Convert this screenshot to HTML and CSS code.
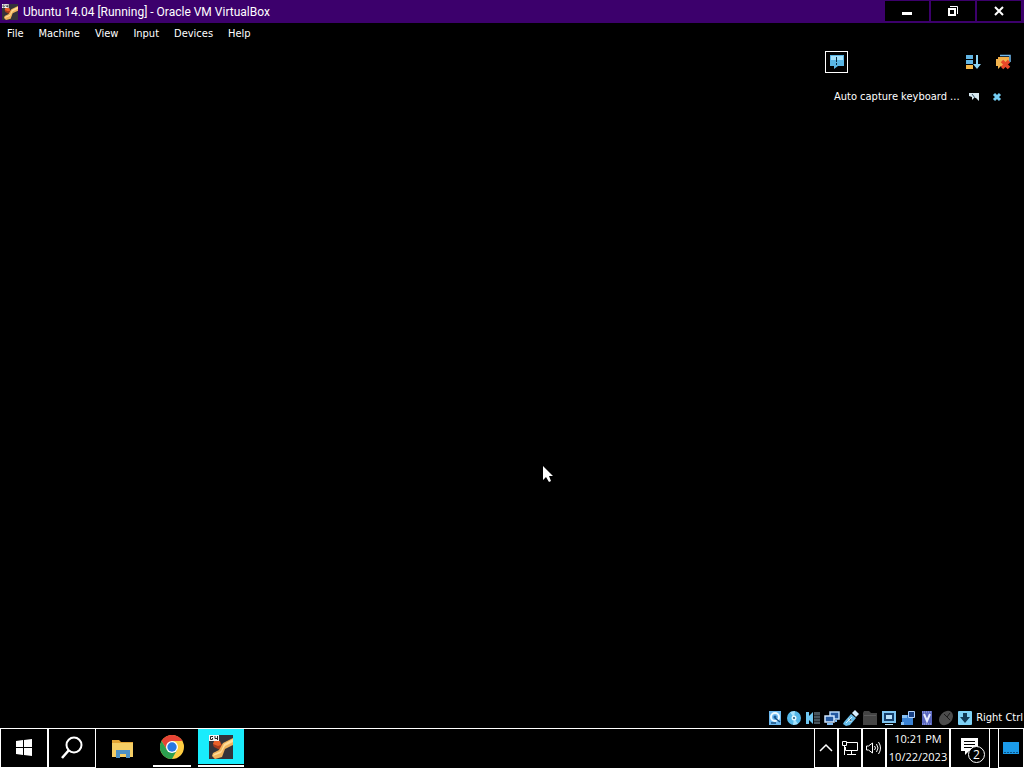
FILE: index.html
```html
<!DOCTYPE html>
<html lang="en">
<head>
<meta charset="utf-8">
<title>Ubuntu 14.04 [Running] - Oracle VM VirtualBox</title>
<link rel="stylesheet" href="styles.css">
</head>
<body>
<svg class="defs" aria-hidden="true">
  <symbol id="vbox" viewBox="0 0 24 24">
    <path fill="#34333a" d="M0 0h24v24H0z"/>
    <path fill="#a63a1b" d="M5 7h6l3 4-3 4-6-3-1-2z"/>
    <path fill="#e8602a" d="M5 6h6l1 4-3 1-5-2z"/>
    <path fill="#f0b45c" d="M24 3v7l-8 4-3 8-7 2-3-3 1-3 6-3 4-7z"/>
    <path fill="#ffdc98" d="M24 4l-9 5-3 7-7 3-1 2 8-3 4-7 8-4z"/>
    <path fill="#f4f4f4" d="M0 0h10v6H0z"/>
    <path fill="none" stroke="#222" d="M4 1.500H1.500v3h2V3M6 1v2.500h3M8.500 1v4"/>
  </symbol>
</svg>
<div class="desktop">
  <header class="titlebar">
    <svg class="app-icon"><use href="#vbox"/></svg>
    <h1 class="title">Ubuntu 14.04 [Running] - Oracle VM VirtualBox</h1>
    <div class="window-controls">
      <button class="window-button" aria-label="Minimize"><svg viewBox="0 0 12 12"><path fill="#fff" d="M1 7h10v3H1z"/></svg></button>
      <button class="window-button" aria-label="Restore"><svg viewBox="0 0 12 12"><path fill="none" stroke="#fff" d="M3 1.500h7.500V9"/><path fill="none" stroke="#fff" stroke-width="2" d="M2 4h6v6H2z"/></svg></button>
      <button class="window-button" aria-label="Close"><svg viewBox="0 0 12 12"><path fill="none" stroke="#fff" stroke-width="2" d="M2 2l8 8M10 2l-8 8"/></svg></button>
    </div>
  </header>
  <nav class="menubar">
    <button class="menu">File</button>
    <button class="menu">Machine</button>
    <button class="menu">View</button>
    <button class="menu">Input</button>
    <button class="menu">Devices</button>
    <button class="menu">Help</button>
  </nav>
  <main class="screen">
    <section class="notifications" aria-label="Notifications">
      <div class="note-tools">
        <button class="note-toggle" aria-label="Toggle notifications"><svg viewBox="0 0 16 16"><path fill="#59b5e4" d="M1 1h14v11H9l-4 3v-3H1z"/><path fill="#a5e1fa" d="M2 2h12v4H2z"/><path fill="#082b42" d="M7 3h1v5H7zM7 9h1v2H7z"/></svg></button>
        <button class="note-button" aria-label="Sort notifications"><svg viewBox="0 0 16 16"><path fill="#62b6e4" d="M1 1h7v4H1zM1 6h7v4H1z"/><path fill="#f4b84a" d="M1 11h7v4H1z"/><path fill="#8dd5f5" d="M11 1h2v9h3l-4 5-4-5h3z"/></svg></button>
        <button class="note-button" aria-label="Remove notifications"><svg viewBox="0 0 16 16"><path fill="none" stroke="#71baf0" stroke-width="1.500" d="M5 1.500h10V8"/><path fill="none" stroke="#f4ad43" stroke-width="2" d="M3 4h10v4"/><path fill="#f2b34e" d="M1 5h11v7H6l-3 3v-3H1z"/><path fill="none" stroke="#e94829" stroke-width="3.500" d="M7 7l7 7M14 7l-7 7"/></svg></button>
      </div>
      <div class="note">
        <span class="note-text">Auto capture keyboard ...</span>
        <button class="note-small" aria-label="Help"><svg viewBox="0 0 12 12"><path fill="#d7e8ef" d="M1 2h10v8L8 7H6L4 9V6L1 5z"/><path stroke="#345265" d="M4 3l3 4"/></svg></button>
        <button class="note-small" aria-label="Dismiss"><svg viewBox="0 0 12 12"><path stroke="#75cef3" stroke-width="3" d="M3 3l6 6M9 3l-6 6"/></svg></button>
      </div>
    </section>
    <svg class="pointer" viewBox="0 0 12 18" aria-hidden="true"><path fill="#fff" d="M1 1v14l3-3 3 5 2-1-2-5h4z"/></svg>
  </main>
  <footer class="statusbar">
    <svg class="status-icon" viewBox="0 0 16 16"><path fill="#6db8ee" d="M2 1h12v14H2z"/><circle cx="8" cy="7" r="4" fill="none" stroke="#eefaff" stroke-width="2"/><circle cx="8" cy="7" r="1.500" fill="#175b9a"/><path stroke="#164e80" stroke-width="1.500" d="M8 8l5 4M4 13h5"/></svg>
    <svg class="status-icon" viewBox="0 0 16 16"><circle cx="8" cy="8" r="7" fill="#55b8e9"/><path fill="#a5e2fc" d="M8 8L4 2l5-1zM8 8l4 6-5 1z"/><circle cx="8" cy="8" r="2.500" fill="#e3f8ff"/><circle cx="8" cy="8" r="1" fill="#17567b"/></svg>
    <svg class="status-icon" viewBox="0 0 16 16"><path fill="#70c8f2" d="M1 2h3v12H1zM4 6l4-4v12l-4-4z"/><path fill="#47545d" d="M9 2h6v12H9z"/><path stroke="#252d32" d="M9 5.500h6M9 8.500h6M9 11.500h6"/></svg>
    <svg class="status-icon" viewBox="0 0 16 16"><path fill="#2358a1" stroke="#b7d9fb" stroke-width="1.500" d="M6 2h9v7H6z"/><path fill="#2358a1" stroke="#d1e8ff" stroke-width="1.500" d="M1 6h9v6H1z"/><path stroke="#80bcf4" stroke-width="2" d="M3 14h6M12 10v2"/></svg>
    <svg class="status-icon" viewBox="0 0 16 16"><path fill="#66bce9" d="M1 12L8 4l5 4-6 7-4 1-3-2z"/><path fill="#d6efff" d="M9 3l3-3 4 4-3 3z"/><path stroke="#d8f5ff" d="M3 13l6-6M6 8v3h3"/></svg>
    <svg class="status-icon" viewBox="0 0 16 16"><path fill="#444" d="M1 3l1-2h5l2 2h6v12H1z"/><path stroke="#5c5c5c" d="M2 5.500h12"/></svg>
    <svg class="status-icon" viewBox="0 0 16 16"><path fill="#7fc5f1" d="M1 1h14v12H1z"/><path fill="#153e6b" d="M3 3h10v8H3z"/><path fill="#b9e1f9" d="M5 5h6v4H5zM4 14h8v1H4z"/></svg>
    <svg class="status-icon" viewBox="0 0 16 16"><path fill="#3a82d4" d="M2 5h11v10H2z"/><path fill="#86bff2" d="M2 5h5v3H2zM1 12h3v3H1z"/><path fill="#173f83" stroke="#b1d4ff" d="M8.500 1.500h6v6h-6z"/></svg>
    <svg class="status-icon" viewBox="0 0 16 16"><path fill="#5966bd" d="M3 1h10v14H3z"/><path fill="none" stroke="#e5eaff" stroke-width="2" d="M5 4l3 7 3-7"/><path stroke="#a4b0ef" stroke-dasharray="1 1" d="M3 2h10M3 14h10"/></svg>
    <svg class="status-icon" viewBox="0 0 16 16"><ellipse cx="8" cy="8" rx="6" ry="8" transform="rotate(42 8 8)" fill="#4c4c4c"/><path fill="none" stroke="#191919" d="M6 4l6 6M9 7l3-4"/></svg>
    <svg class="status-icon" viewBox="0 0 16 16"><rect x="1" y="1" width="14" height="14" rx="1" fill="#7ed2f7"/><path fill="#123b57" d="M6 3h4v4h3l-5 6-5-6h3z"/></svg>
    <span class="host-key">Right Ctrl</span>
  </footer>
  <div class="taskbar">
    <button class="task framed" aria-label="Start"><svg class="glyph" viewBox="0 0 24 24"><path fill="#fff" d="M4 5l7-1v7H4zM12 4l8-1v8h-8zM4 12h7v7l-7-1zM12 12h8v8l-8-1z"/></svg></button>
    <button class="task framed" aria-label="Search"><svg class="glyph" viewBox="0 0 24 24"><circle cx="14" cy="9" r="7.500" fill="none" stroke="#fff" stroke-width="2"/><path stroke="#fff" stroke-width="2.500" d="M9 14l-7 8"/></svg></button>
    <button class="task explorer" aria-label="File Explorer"><svg class="glyph" viewBox="0 0 24 24"><path fill="#e3a535" d="M1 3h7l2 2h12v4H1z"/><path fill="#f5ce65" d="M1 6h21v14H1z"/><path fill="#4d91c5" d="M5 13h14v8h-4v-4H9v4H5z"/></svg></button>
    <button class="task chrome" aria-label="Google Chrome"><svg class="glyph" viewBox="0 0 24 24"><circle cx="12" cy="12" r="12" fill="#ffcd42"/><path fill="#e64335" d="M1.600 6A12 12 0 0 1 22.400 6H12l-5 9z"/><path fill="#2c9f4f" d="M1.600 6A12 12 0 0 0 12 24l5-9H7z"/><circle cx="12" cy="12" r="6" fill="#fff"/><circle cx="12" cy="12" r="4.700" fill="#2878e2"/></svg></button>
    <button class="task active" aria-label="VirtualBox"><svg class="glyph"><use href="#vbox"/></svg></button>
    <div class="tray">
      <button class="tray-button" aria-label="Show hidden icons"><svg viewBox="0 0 18 18"><path fill="none" stroke="#fff" stroke-width="1.500" d="M3 12l6-6 6 6"/></svg></button>
      <button class="tray-button" aria-label="Network"><svg viewBox="0 0 18 18"><path fill="none" stroke="#fff" d="M6 3.500h10.500v8H4.500V8M10.500 12v3M6 15.500h9M1.500 2.500h4v4h-4zM3.500 7v9"/></svg></button>
      <button class="tray-button" aria-label="Volume"><svg viewBox="0 0 18 18"><path fill="none" stroke="#fff" d="M1.500 7v4h2l4 3V4l-4 3zM9.500 7q2 2 0 4M11.500 5q3 4 0 8M13.500 3q4 6 0 12"/></svg></button>
      <button class="clock"><time>10:21 PM</time><time>10/22/2023</time></button>
      <button class="action" aria-label="2 notifications"><span class="action-icon"><svg viewBox="0 0 24 20"><path fill="#fff" d="M1 0h17v13H9l-4 4v-4H1z"/><path stroke="#000" d="M4 3.500h11M4 6.500h11M4 9.500h8"/></svg><span class="badge">2</span></span></button>
      <button class="show-desktop" aria-label="Desktop"><svg viewBox="0 0 18 14"><path fill="#1b9bea" d="M1 1h16v12H1z"/><path stroke="#0a5388" stroke-dasharray="2 1" d="M2 11.500h14"/></svg></button>
    </div>
  </div>
</div>
</body>
</html>
```
FILE: styles.css
```css
* { box-sizing: border-box; }
body { margin: 0; background: #000; color: #fff; font: 11px/16px "DejaVu Sans Condensed", "Noto Sans", sans-serif; }
button { margin: 0; padding: 0; border: 0; background: #000; color: inherit; font: inherit; }
svg { display: block; flex: none; }
.defs { position: absolute; width: 0; height: 0; }
.desktop { display: flex; flex-direction: column; min-height: 100vh; }
.titlebar { display: flex; align-items: center; height: 23px; padding-left: 2px; background: #3c006c; }
.app-icon { width: 16px; height: 16px; }
.title { flex: 1; margin: 0 0 0 5px; font: 400 12px/16px Roboto, sans-serif; white-space: nowrap; }
.window-controls { display: flex; gap: 2px; align-self: flex-start; padding: 1px 3px 0 0; }
.window-button { display: grid; place-items: center; width: 44px; height: 20px; }
.window-button svg { width: 12px; height: 12px; }
.menubar { display: flex; gap: 15px; height: 20px; padding: 1px 7px 0; }
.screen { flex: 1; position: relative; }
.notifications { display: flex; flex-direction: column; gap: 16px; width: 186px; margin: 8px 13px 0 auto; }
.note-tools { display: flex; align-items: center; gap: 14px; }
.note-toggle { display: grid; place-items: center; width: 23px; height: 22px; margin-right: auto; border: 1px solid #fff; }
.note-toggle svg, .note-button svg { width: 16px; height: 16px; }
.note { display: flex; align-items: center; gap: 11px; padding: 0 8px 0 9px; }
.note-text { flex: 1; min-width: 0; white-space: nowrap; }
.note-small svg { width: 12px; height: 12px; }
.pointer { position: absolute; left: 53%; top: 63.500%; width: 12px; height: 18px; margin-left: -1px; }
.statusbar { display: flex; justify-content: flex-end; align-items: center; gap: 3px; height: 20px; padding-right: 1px; }
.status-icon { width: 16px; height: 16px; }
.host-key { white-space: nowrap; }
.taskbar { display: flex; height: 40px; border-top: 1px solid #fff; }
.task { display: grid; place-items: center; width: 48px; height: 39px; }
.framed { border: solid #fff; border-width: 0 1px 1px 1px; }
.glyph { width: 24px; height: 24px; }
.explorer { width: 53px; }
.chrome { width: 38px; height: 38px; margin: 0 7px 0 4px; border-bottom: 2px solid #fff; }
.active { width: 46px; height: 38px; border-bottom: 2px solid #fff; padding-bottom: 1px; background: #19ecfc; box-shadow: inset 0 -1px #000; }
.tray { display: flex; margin-left: auto; }
.tray button { display: grid; place-items: center; border: solid #fff; border-width: 0 1px 1px 1px; }
.tray .tray-button { width: 24px; }
.tray-button svg { width: 18px; height: 18px; }
.tray .clock { align-content: center; width: 64px; font: 11px/18px "Open Sans", sans-serif; }
.tray .action { width: 40px; }
.action-icon { position: relative; padding-left: 4px; }
.action svg { width: 24px; height: 20px; }
.badge { position: absolute; right: -1px; bottom: -5px; width: 17px; height: 17px; border: 1px solid #fff; border-radius: 50%; background: #000; font: 12px/15px "Open Sans", sans-serif; text-align: center; }
.tray .show-desktop { width: 26px; margin-left: 8px; }
.show-desktop svg { width: 18px; height: 14px; }
```
